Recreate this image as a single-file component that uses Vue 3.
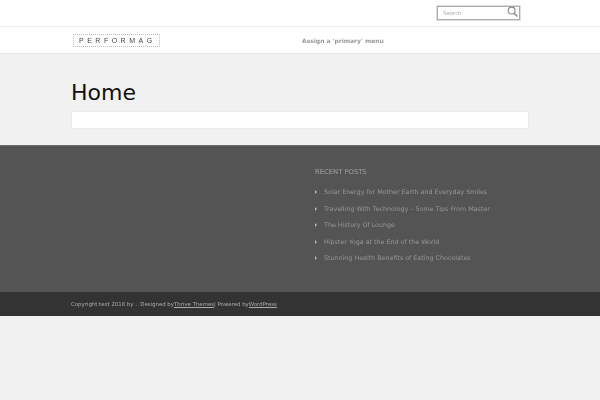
<script setup>
const posts = [
  'Solar Energy for Mother Earth and Everyday Smiles',
  'Travelling With Technology – Some Tips From Master',
  'The History Of Lounge',
  'Hipster Yoga at the End of the World',
  'Stunning Health Benefits of Eating Chocolates'
]
</script>

<template>
  <div class="page">
    <div class="topbar">
      <div class="search">
        <span class="search-text">Search</span>
        <svg class="search-icon" width="11" height="11" viewBox="0 0 12 12" fill="none" stroke="#888" stroke-width="1.2">
          <circle cx="5" cy="5" r="3.8" />
          <path d="M7.8 7.8 11.4 11.4" stroke-width="1.6" />
        </svg>
      </div>
    </div>
    <header class="header">
      <div class="logo">PERFORMAG</div>
      <div class="menu">Assign a 'primary' menu</div>
    </header>
    <main class="main">
      <h1 class="title">Home</h1>
      <div class="panel"></div>
    </main>
    <section class="widgets">
      <div class="col">
        <div class="widget-title">RECENT POSTS</div>
        <ul class="list">
          <li v-for="p in posts" :key="p" class="item"><span class="arrow"></span><span class="soft">{{ p }}</span></li>
        </ul>
      </div>
    </section>
    <footer class="footer">
      <span class="soft">Copyright text 2018 by .&nbsp; Designed by<u>Thrive Themes</u>| Powered by<u>WordPress</u></span>
    </footer>
  </div>
</template>

<style>
html, body { margin: 0; background: #f1f1f1; }
</style>

<style scoped>
.page {
  width: 600px;
  height: 400px;
  overflow: hidden;
  background: #f1f1f1;
  font-family: "DejaVu Sans", sans-serif;
}
.soft { filter: blur(0.35px); }
.topbar {
  height: 26px;
  background: #fff;
  border-bottom: 1px solid #ececec;
  display: flex;
  justify-content: flex-end;
  padding-right: 80px;
}
.search {
  width: 76px;
  height: 12px;
  margin-top: 6px;
  border: 1px solid #aaa;
  box-shadow: 0 0 0 1px #e0e0e0;
  background: #fff;
  padding: 0 0 0 5px;
  display: flex;
  align-items: center;
  justify-content: space-between;
}
.search-text { font-size: 5.4px; color: #aaa; filter: blur(0.35px); }
.search-icon { margin-right: 1px; margin-top: -3px; }
.header {
  height: 26px;
  background: #fff;
  border-bottom: 1px solid #e8e8e8;
  display: flex;
  align-items: center;
  padding-left: 73px;
}
.logo {
  width: 87px;
  height: 13px;
  box-sizing: border-box;
  border: 1px dotted #bbb;
  font-family: "Liberation Sans", sans-serif;
  font-size: 7px;
  letter-spacing: 3.5px;
  line-height: 11px;
  color: #444;
  padding-left: 5px;
  white-space: nowrap;
  overflow: hidden;
  filter: blur(0.25px);
}
.menu {
  margin-left: 142px;
  font-size: 6px;
  font-weight: 700;
  color: #999;
  white-space: nowrap;
  filter: blur(0.35px);
}
.main {
  height: 91px;
  padding: 0 71px;
  box-sizing: border-box;
}
.title {
  margin: 0;
  padding-top: 24px;
  font-size: 22px;
  font-weight: 400;
  line-height: 30px;
  color: #111;
}
.panel {
  margin-top: 3px;
  height: 16px;
  background: #fff;
  border: 1px solid #ebebeb;
}
.widgets {
  height: 147px;
  background: #555454;
  border-top: 1px solid #6a6a6a;
  box-sizing: border-box;
  padding: 21px 0 0 315px;
}
.widget-title {
  font-size: 6.8px;
  color: #a0a0a0;
  line-height: 10px;
  filter: blur(0.35px);
}
.list {
  list-style: none;
  margin: 10px 0 0;
  padding: 0;
}
.item {
  height: 16.5px;
  font-size: 6.35px;
  line-height: 10px;
  color: #969696;
  white-space: nowrap;
  display: flex;
  align-items: flex-start;
}
.arrow {
  width: 0;
  height: 0;
  margin: 3px 7px 0 0;
  border-left: 2.5px solid #b5b5b5;
  border-top: 2.5px solid transparent;
  border-bottom: 2.5px solid transparent;
}
.footer {
  height: 24px;
  background: #333;
  display: flex;
  align-items: center;
  padding-left: 71px;
  font-size: 5.4px;
  color: #aaa;
  white-space: nowrap;
}
</style>
